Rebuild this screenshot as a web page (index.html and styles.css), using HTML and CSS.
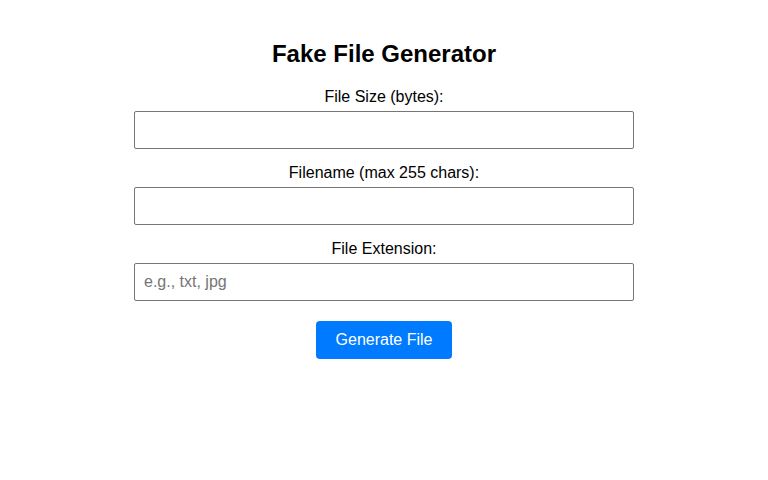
FILE: index.html
```html
<!DOCTYPE html>
<html lang="en">
  <head>
    <meta charset="UTF-8" />
    <meta name="viewport" content="width=device-width, initial-scale=1.0" />
    <title>Fake File Generator</title>
    <link rel="stylesheet" href="styles.css">
  </head>
  <body>
    <div class="container">
      <h1>Fake File Generator</h1>
      <form class="form">
        <div class="field">
          <label for="fileSize">File Size (bytes):</label>
          <input type="number" id="fileSize" />
        </div>
        <div class="field">
          <label for="fileName">Filename (max 255 chars):</label>
          <input type="text" id="fileName" maxlength="255" />
        </div>
        <div class="field">
          <label for="fileExt">File Extension:</label>
          <input type="text" id="fileExt" placeholder="e.g., txt, jpg" />
        </div>
        <button type="submit">Generate File</button>
      </form>
    </div>
  </body>
</html>
```

FILE: styles.css
```css
* {
  margin: 0;
  padding: 0;
  box-sizing: border-box;
}

body {
  font-family: "Liberation Sans", Arial, sans-serif;
  background-color: #ffffff;
  color: #000;
}

.container {
  width: 500px;
  margin: 0 auto;
  padding-top: 40px;
  text-align: center;
}

h1 {
  font-size: 24px;
  font-weight: bold;
  margin-bottom: 20px;
}

.form {
  display: flex;
  flex-direction: column;
  align-items: center;
}

.field {
  width: 100%;
  margin-bottom: 15px;
}

label {
  display: block;
  font-size: 16px;
  margin-bottom: 5px;
}

input {
  display: block;
  width: 100%;
  height: 38px;
  padding: 8px 9px;
  font-size: 16px;
  font-family: "Liberation Sans", Arial, sans-serif;
  border: 1px solid #767676;
  border-radius: 2px;
  outline: none;
}

input::placeholder {
  color: #757575;
}

button {
  margin-top: 5px;
  padding: 10px 20px;
  background-color: #007bff;
  color: white;
  border: none;
  border-radius: 4px;
  cursor: pointer;
  font-size: 16px;
  font-family: "Liberation Sans", Arial, sans-serif;
}

button:hover {
  background-color: #0069d9;
}
```
